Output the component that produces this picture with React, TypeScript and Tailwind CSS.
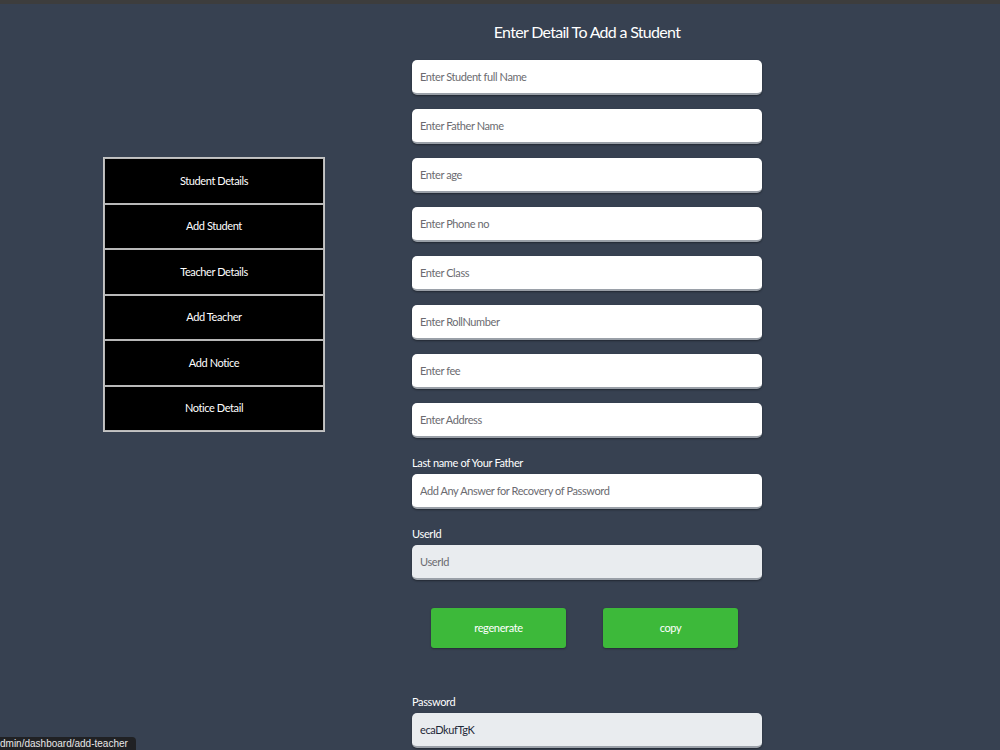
import { useState } from 'react';

const menu = ['Student Details', 'Add Student', 'Teacher Details', 'Add Teacher', 'Add Notice', 'Notice Detail'];

const fields = [
  'Enter Student full Name',
  'Enter Father Name',
  'Enter age',
  'Enter Phone no',
  'Enter Class',
  'Enter RollNumber',
  'Enter fee',
  'Enter Address',
];

const inputCls =
  'w-full h-[35px] rounded-[5px] px-[8px] text-[11px] tracking-[-0.4px] text-gray-800 placeholder:text-[#6b6b70] border-b-2 border-[#9aa0a8] shadow-[0_1px_2px_rgba(0,0,0,0.4)] focus:outline-none';

const labelCls = 'text-white text-[11px] leading-[16px] tracking-[-0.35px]';

export default function App() {
  const [password] = useState('ecaDkufTgK');

  return (
    <div className="relative h-[750px] overflow-hidden bg-[#374151] font-['Lato',sans-serif]">
      <div className="h-[4px] bg-[#3d3d3d]" />
      <div className="flex">
        <div className="pl-[103px] pt-[153px] w-[412px] shrink-0">
          <div className="w-[222px] border border-[#c4c4c4] bg-black">
            {menu.map((m) => (
              <div
                key={m}
                className="h-[45.5px] flex items-center justify-center border border-[#b8b8b8] text-white text-[11px] tracking-[-0.4px]"
              >
                {m}
              </div>
            ))}
          </div>
        </div>

        <div className="w-[350px] flex flex-col">
          <h1 className="text-center text-white text-[16px] tracking-[-0.7px] mt-[15px] h-[26px] leading-[26px]">
            Enter Detail To Add a Student
          </h1>
          <div className="flex flex-col gap-[14px] mt-[15px]">
            {fields.map((f) => (
              <input key={f} className={`${inputCls} bg-white`} placeholder={f} />
            ))}
          </div>

          <label className={`mt-[17px] ${labelCls}`}>Last name of Your Father</label>
          <input className={`${inputCls} bg-white mt-[3px]`} placeholder="Add Any Answer for Recovery of Password" />

          <label className={`mt-[17px] ${labelCls}`}>UserId</label>
          <input className={`${inputCls} bg-[#e9ecef] mt-[3px]`} placeholder="UserId" disabled />

          <div className="flex gap-[37px] pl-[19px] mt-[28px]">
            <button className="w-[135px] h-[40px] rounded-[3px] bg-[#3db93a] text-white text-[11px] tracking-[-0.35px] shadow-[0_1px_2px_rgba(0,0,0,0.35)]">
              regenerate
            </button>
            <button className="w-[135px] h-[40px] rounded-[3px] bg-[#3db93a] text-white text-[11px] tracking-[-0.35px] shadow-[0_1px_2px_rgba(0,0,0,0.35)]">
              copy
            </button>
          </div>

          <label className={`mt-[46px] ${labelCls}`}>Password</label>
          <input className={`${inputCls} bg-[#e9ecef] mt-[3px] text-[#333]`} value={password} readOnly />
        </div>
      </div>

      <div className="absolute left-0 bottom-0 w-[136px] h-[13px] rounded-tr-[4px] bg-[#202124] text-[#e8e8e8] text-[10px] leading-[13px] overflow-hidden whitespace-nowrap font-['Liberation_Sans',sans-serif]">
        dmin/dashboard/add-teacher
      </div>
    </div>
  );
}
